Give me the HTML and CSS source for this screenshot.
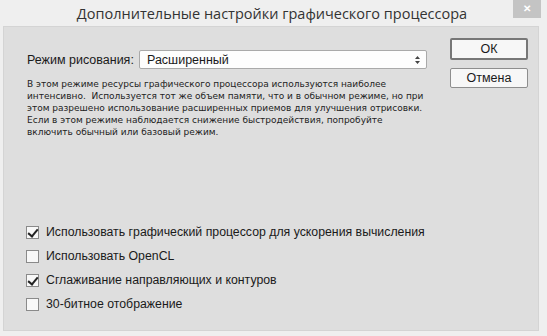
FILE: index.html
```html
<!DOCTYPE html>
<html lang="ru">
<head>
    <meta charset="UTF-8">
    <title>Дополнительные настройки графического процессора</title>
    <link rel="stylesheet" href="styles.css">
</head>
<body>
    <div class="window">
        <div class="titlebar">
            <div class="title">Дополнительные настройки графического процессора</div>
            <div class="close">&#x2715;</div>
        </div>
        <div class="panel">
            <div class="top">
                <div class="main">
                    <div class="mode-row">
                        <span class="label">Режим рисования:</span>
                        <div class="select">
                            <span>Расширенный</span>
                            <svg class="arrows" width="7" height="10" viewBox="0 0 7 10">
                                <path d="M3.5 1 L6 4 L1 4 Z M3.5 9 L6 6 L1 6 Z" fill="#444"/>
                            </svg>
                        </div>
                    </div>
                    <p class="desc">В этом режиме ресурсы графического процессора используются наиболее интенсивно.&nbsp; Используется тот же объем памяти, что и в обычном режиме, но при этом разрешено использование расширенных приемов для улучшения отрисовки. Если в этом режиме наблюдается снижение быстродействия, попробуйте включить обычный или базовый режим.</p>
                </div>
                <div class="buttons">
                    <button class="btn default">ОК</button>
                    <button class="btn">Отмена</button>
                </div>
            </div>
            <ul class="options">
                <li><span class="check on"></span>Использовать графический процессор для ускорения вычисления</li>
                <li><span class="check"></span>Использовать OpenCL</li>
                <li><span class="check on"></span>Сглаживание направляющих и контуров</li>
                <li><span class="check"></span>30-битное отображение</li>
            </ul>
        </div>
    </div>
</body>
</html>
```

FILE: styles.css
```css
body {
    margin: 0;
    background: #efefef;
    font-family: "Liberation Sans", sans-serif;
    color: #1a1a1a;
}

.window {
    width: 547px;
    height: 336px;
    background: #efefef;
    padding: 0 8px 5px 3px;
    box-sizing: border-box;
    display: flex;
    flex-direction: column;
}

.titlebar {
    height: 26px;
    display: flex;
    align-items: flex-start;
    position: relative;
}

.title {
    flex: 1;
    text-align: center;
    font-family: "Open Sans", sans-serif;
    font-size: 14.5px;
    line-height: 27px;
    color: #333;
    padding-left: 2px;
}

.close {
    position: absolute;
    right: -2px;
    top: 0;
    width: 28px;
    height: 18px;
    background: #c4c4c4;
    color: #fff;
    font-size: 10px;
    font-weight: bold;
    text-align: center;
    line-height: 18px;
}

.panel {
    flex: 1;
    background: #dedede;
    border: 1px solid #d4d4d4;
    padding: 11px 10px 0 23px;
    display: flex;
    flex-direction: column;
}

.top {
    display: flex;
    justify-content: space-between;
}

.main {
    width: 400px;
}

.mode-row {
    display: flex;
    align-items: center;
    margin-top: 12px;
}

.label {
    width: 112px;
    white-space: nowrap;
    font-size: 12.5px;
}

.select {
    width: 288px;
    height: 19px;
    background: #fdfdfd;
    border: 1px solid #a9a9a9;
    border-radius: 2px;
    display: flex;
    align-items: center;
    justify-content: space-between;
    padding: 0 5px 0 7px;
    box-sizing: border-box;
    font-size: 12.5px;
}

.desc {
    margin: 9px 0 0 0;
    font-family: "DejaVu Sans", sans-serif;
    font-size: 9px;
    line-height: 12px;
    width: 400px;
    color: #222;
}

.buttons {
    display: flex;
    flex-direction: column;
    gap: 8px;
}

.btn {
    width: 78px;
    height: 20px;
    background: #f7f7f7;
    border: 1px solid #8e8e8e;
    border-radius: 2px;
    font-family: "Liberation Sans", sans-serif;
    font-size: 12.5px;
    color: #1a1a1a;
    padding: 0;
}

.btn.default {
    height: 22px;
    border: 2px solid #777;
}

.options {
    list-style: none;
    margin: auto 0 14px 0;
    padding: 0;
}

.options li {
    display: flex;
    align-items: center;
    height: 24px;
    font-size: 12.3px;
}

.check {
    width: 11px;
    height: 11px;
    border: 1px solid #8a8a8a;
    background: #f8f8f8;
    margin: 0 7px 0 -1px;
    position: relative;
}

.check.on::after {
    content: "";
    position: absolute;
    left: 3px;
    top: 0;
    width: 4px;
    height: 8px;
    border: solid #222;
    border-width: 0 2px 2px 0;
    transform: rotate(40deg);
}
```
